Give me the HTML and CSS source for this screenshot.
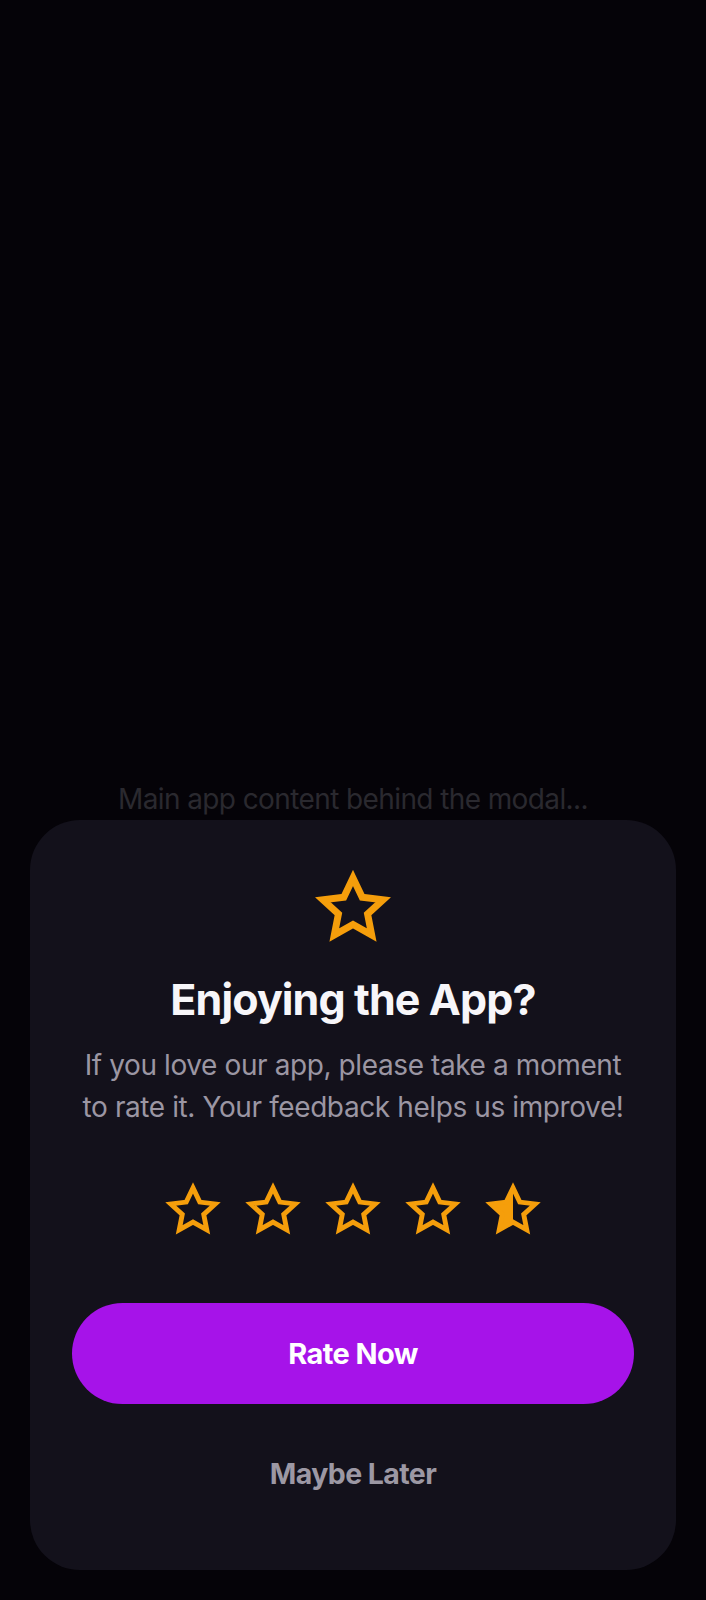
FILE: index.html
```html
<!DOCTYPE html>
<html lang="en">
<head>
<meta charset="utf-8">
<link rel="stylesheet" href="styles.css">
</head>
<body>
<div class="screen">
  <main class="app">
    <p class="behind">Main app content behind the modal...</p>
  </main>
  <div class="sheet">
    <svg class="hero-star" viewBox="0 0 24 24"><path d="M12 2.5l2.9 6.1 6.6.8-4.9 4.5 1.3 6.6L12 17.2l-5.9 3.3 1.3-6.6-4.9-4.5 6.6-.8z" fill="none" stroke="#f59e0b" stroke-width="2.2"/></svg>
    <h1 class="title">Enjoying the App?</h1>
    <p class="desc">If you love our app, please take a moment to rate it. Your feedback helps us improve!</p>
    <div class="stars">
      <svg class="star" viewBox="0 0 24 24"><path d="M12 2.5l2.9 6.1 6.6.8-4.9 4.5 1.3 6.6L12 17.2l-5.9 3.3 1.3-6.6-4.9-4.5 6.6-.8z" fill="none" stroke="#f59e0b" stroke-width="2.1"/></svg>
      <svg class="star" viewBox="0 0 24 24"><path d="M12 2.5l2.9 6.1 6.6.8-4.9 4.5 1.3 6.6L12 17.2l-5.9 3.3 1.3-6.6-4.9-4.5 6.6-.8z" fill="none" stroke="#f59e0b" stroke-width="2.1"/></svg>
      <svg class="star" viewBox="0 0 24 24"><path d="M12 2.5l2.9 6.1 6.6.8-4.9 4.5 1.3 6.6L12 17.2l-5.9 3.3 1.3-6.6-4.9-4.5 6.6-.8z" fill="none" stroke="#f59e0b" stroke-width="2.1"/></svg>
      <svg class="star" viewBox="0 0 24 24"><path d="M12 2.5l2.9 6.1 6.6.8-4.9 4.5 1.3 6.6L12 17.2l-5.9 3.3 1.3-6.6-4.9-4.5 6.6-.8z" fill="none" stroke="#f59e0b" stroke-width="2.1"/></svg>
      <svg class="star" viewBox="0 0 24 24"><path d="M12 2.5L9.1 8.6l-6.6.8 4.9 4.5-1.3 6.6L12 17.2z" fill="#f59e0b"/><path d="M12 2.5l2.9 6.1 6.6.8-4.9 4.5 1.3 6.6L12 17.2l-5.9 3.3 1.3-6.6-4.9-4.5 6.6-.8z" fill="none" stroke="#f59e0b" stroke-width="2.1"/></svg>
    </div>
    <button class="primary">Rate Now</button>
    <button class="secondary">Maybe Later</button>
  </div>
</div>
</body>
</html>
```

FILE: styles.css
```css
html, body {
  margin: 0;
  padding: 0;
  background: #050308;
}
body {
  font-family: Inter, "Noto Sans", sans-serif;
}
.screen {
  width: 706px;
  height: 1600px;
  display: flex;
  flex-direction: column;
  justify-content: flex-end;
  box-sizing: border-box;
  padding: 0 30px 30px;
}
.app {
  display: flex;
  justify-content: center;
}
.behind {
  margin: 0 0 4px;
  color: #2a292f;
  font-size: 28px;
  letter-spacing: -0.6px;
}
.sheet {
  background: #13111b;
  border-radius: 50px;
  padding: 50px 42px 66px;
  display: flex;
  flex-direction: column;
  align-items: center;
}
.hero-star {
  width: 76px;
  height: 76px;
  display: block;
}
.title {
  margin: 27px 0 0;
  color: #f7f6f9;
  font-size: 43px;
  font-weight: 700;
  letter-spacing: -0.9px;
  line-height: 52px;
}
.desc {
  margin: 19px 0 0;
  color: #9b96a3;
  font-size: 28px;
  line-height: 42px;
  text-align: center;
  letter-spacing: -0.4px;
  padding: 0;
}
.stars {
  margin-top: 54px;
  display: flex;
  gap: 24px;
}
.star {
  width: 56px;
  height: 56px;
  display: block;
}
.primary {
  margin-top: 65px;
  width: 100%;
  height: 101px;
  border: none;
  border-radius: 51px;
  background: #a613e9;
  color: #ffffff;
  font-family: inherit;
  font-size: 29px;
  font-weight: 700;
  letter-spacing: -0.6px;
}
.secondary {
  margin-top: 40px;
  background: none;
  border: none;
  color: #9c98a4;
  font-family: inherit;
  font-size: 28.5px;
  font-weight: 700;
  letter-spacing: -0.6px;
  padding: 0;
  line-height: 60px;
}
```
